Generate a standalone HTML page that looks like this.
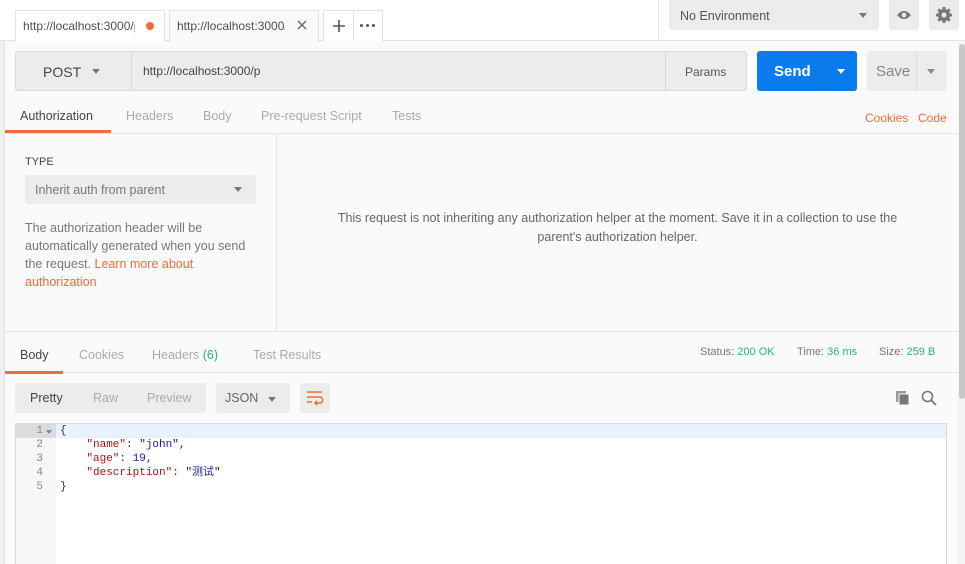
<!DOCTYPE html>
<html><head><meta charset="utf-8"><style>
*{box-sizing:border-box;margin:0;padding:0}
body{width:965px;height:564px;overflow:hidden;background:#fafafa;font-family:"Liberation Sans","Noto Sans CJK SC",sans-serif;font-size:12px;color:#505050;position:relative}
.a{position:absolute}
.t{white-space:nowrap}
.code{font-family:"Liberation Mono","Noto Sans CJK SC",monospace;font-size:11px}
</style></head><body>
<!-- top bar -->
<div class="a" style="left:0;top:0;width:965px;height:41px;background:#fff;border-bottom:1px solid #e3e3e3"></div>
<div class="a" style="left:15px;top:10px;width:150px;height:32px;background:#fff;border:1px solid #e3e3e3;border-bottom:none"></div>
<div class="a t" style="left:23px;top:19px;font-size:12px;color:#505050;width:112px;overflow:hidden">http://localhost:3000/p</div>
<div class="a" style="left:146px;top:22px;width:8px;height:8px;border-radius:50%;background:#f26b3a"></div>
<div class="a" style="left:169px;top:10px;width:150px;height:32px;background:#fafafa;border:1px solid #e3e3e3;border-bottom:none"></div>
<div class="a t" style="left:177px;top:19px;font-size:12px;width:108px;overflow:hidden">http://localhost:3000/p</div>
<svg class="a" style="left:297px;top:20px" width="10" height="10"><path d="M1 1L9 9M9 1L1 9" stroke="#666" stroke-width="1.4"/></svg>
<div class="a" style="left:323px;top:10px;width:60px;height:31px;border:1px solid #e3e3e3;border-bottom:none;background:#fff"></div>
<div class="a" style="left:353px;top:10px;width:1px;height:31px;background:#e3e3e3"></div>
<svg class="a" style="left:332px;top:19px" width="14" height="14"><path d="M7 1V13M1 7H13" stroke="#555" stroke-width="1.6"/></svg>
<div class="a" style="left:360px;top:24px;width:3px;height:3px;border-radius:50%;background:#555;box-shadow:6px 0 #555,12px 0 #555"></div>
<div class="a" style="left:658px;top:0;width:1px;height:41px;background:#e3e3e3"></div>
<div class="a" style="left:669px;top:0;width:210px;height:30px;background:#ececec;border-radius:0 0 3px 3px"></div>
<div class="a t" style="left:680px;top:9px;font-size:12.5px;color:#555">No Environment</div>
<div class="a" style="left:859px;top:13px;border-left:4px solid transparent;border-right:4px solid transparent;border-top:5px solid #777"></div>
<div class="a" style="left:889px;top:0;width:30px;height:30px;background:#ececec;border-radius:0 0 3px 3px"></div>
<svg class="a" style="left:896px;top:9px" width="16" height="12"><path d="M1 6Q8 -2 15 6Q8 14 1 6Z" fill="#777"/><circle cx="8" cy="6" r="2.3" fill="#ececec"/></svg>
<div class="a" style="left:929px;top:0;width:30px;height:30px;background:#ececec;border-radius:0 0 3px 3px"></div>
<svg class="a" style="left:935px;top:6px" width="18" height="18" viewBox="0 0 18 18"><g fill="#777"><circle cx="9" cy="9" r="6"/><rect x="7.5" y="1" width="3" height="16"/><rect x="1" y="7.5" width="16" height="3"/><rect x="7.5" y="1" width="3" height="16" transform="rotate(45 9 9)"/><rect x="7.5" y="1" width="3" height="16" transform="rotate(-45 9 9)"/></g><circle cx="9" cy="9" r="2.5" fill="#ececec"/></svg>
<!-- left strip & scrollbar -->
<div class="a" style="left:0;top:41px;width:5px;height:523px;background:#f0f0f0;border-right:1px solid #e0e0e0"></div>
<div class="a" style="left:958px;top:42px;width:7px;height:522px;background:#f3f3f3"></div>
<div class="a" style="left:959px;top:44px;width:6px;height:355px;background:#c8c8c8;border-radius:3px"></div>
<!-- request bar -->
<div class="a" style="left:15px;top:51px;width:732px;height:40px;background:#ececec;border:1px solid #d8d8d8;border-radius:3px"></div>
<div class="a" style="left:131px;top:52px;width:1px;height:38px;background:#d8d8d8"></div>
<div class="a" style="left:665px;top:52px;width:1px;height:38px;background:#d8d8d8"></div>
<div class="a t" style="left:43px;top:64px;font-size:14px;color:#444">POST</div>
<div class="a" style="left:92px;top:69px;border-left:4px solid transparent;border-right:4px solid transparent;border-top:5px solid #777"></div>
<div class="a t" style="left:143px;top:64px;font-size:12px;color:#444">http://localhost:3000/p</div>
<div class="a t" style="left:685px;top:65px;font-size:12px;color:#555">Params</div>
<div class="a" style="left:757px;top:51px;width:100px;height:40px;background:#097bed;border-radius:3px"></div>
<div class="a" style="left:826px;top:51px;width:1px;height:40px;background:#1a6fd0"></div>
<div class="a t" style="left:774px;top:63px;font-size:15px;font-weight:bold;color:#fff">Send</div>
<div class="a" style="left:837px;top:69px;border-left:4px solid transparent;border-right:4px solid transparent;border-top:5px solid #fff"></div>
<div class="a" style="left:867px;top:51px;width:80px;height:40px;background:#ececec;border-radius:3px"></div>
<div class="a" style="left:916px;top:51px;width:1px;height:40px;background:#dcdcdc"></div>
<div class="a t" style="left:876px;top:63px;font-size:15px;color:#888">Save</div>
<div class="a" style="left:927px;top:69px;border-left:4px solid transparent;border-right:4px solid transparent;border-top:5px solid #888"></div>
<!-- request tabs -->
<div class="a t" style="left:20px;top:109px;font-size:12.5px;color:#444">Authorization</div>
<div class="a t" style="left:126px;top:109px;font-size:12.5px;color:#aaa">Headers</div>
<div class="a t" style="left:203px;top:109px;font-size:12.5px;color:#aaa">Body</div>
<div class="a t" style="left:261px;top:109px;font-size:12.5px;color:#aaa">Pre-request Script</div>
<div class="a t" style="left:392px;top:109px;font-size:12.5px;color:#aaa">Tests</div>
<div class="a t" style="left:865px;top:111px;font-size:12px;color:#f26b3a">Cookies</div>
<div class="a t" style="left:918px;top:111px;font-size:12px;color:#f26b3a">Code</div>
<div class="a" style="left:5px;top:133px;width:953px;height:1px;background:#e5e5e5"></div>
<div class="a" style="left:5px;top:130px;width:106px;height:3px;background:#f26b3a"></div>
<!-- auth panel -->
<div class="a" style="left:276px;top:134px;width:1px;height:197px;background:#e5e5e5"></div>
<div class="a t" style="left:25px;top:156px;font-size:11px;color:#444">TYPE</div>
<div class="a" style="left:25px;top:175px;width:231px;height:29px;background:#ececec;border-radius:3px"></div>
<div class="a t" style="left:35px;top:183px;font-size:12.5px;color:#777">Inherit auth from parent</div>
<div class="a" style="left:234px;top:187px;border-left:4px solid transparent;border-right:4px solid transparent;border-top:5px solid #777"></div>
<div class="a" style="left:25px;top:219px;width:232px;font-size:12.5px;line-height:18px;color:#777">The authorization header will be<br>automatically generated when you send<br>the request. <span style="color:#f26b3a">Learn more about<br>authorization</span></div>
<div class="a t" style="left:277px;top:209px;width:681px;text-align:center;font-size:12.5px;line-height:19px;color:#666">This request is not inheriting any authorization helper at the moment. Save it in a collection to use the<br>parent's authorization helper.</div>
<div class="a" style="left:5px;top:331px;width:953px;height:1px;background:#e5e5e5"></div>
<!-- response tabs -->
<div class="a t" style="left:20px;top:348px;font-size:12.5px;color:#444">Body</div>
<div class="a t" style="left:79px;top:348px;font-size:12.5px;color:#aaa">Cookies</div>
<div class="a t" style="left:152px;top:348px;font-size:12.5px;color:#aaa">Headers <span style="color:#26b47f">(6)</span></div>
<div class="a t" style="left:253px;top:348px;font-size:12.5px;color:#aaa">Test Results</div>
<div class="a t" style="left:700px;top:346px;font-size:11px;color:#777">Status: <span style="color:#26b47f">200 OK</span></div>
<div class="a t" style="left:797px;top:346px;font-size:11px;color:#777">Time: <span style="color:#26b47f">36 ms</span></div>
<div class="a t" style="left:879px;top:346px;font-size:11px;color:#777">Size: <span style="color:#26b47f">259 B</span></div>
<div class="a" style="left:5px;top:372px;width:953px;height:1px;background:#e5e5e5"></div>
<div class="a" style="left:5px;top:371px;width:58px;height:3px;background:#f26b3a"></div>
<!-- response toolbar -->
<div class="a" style="left:15px;top:383px;width:191px;height:30px;background:#ececec;border-radius:3px"></div>
<div class="a t" style="left:30px;top:391px;font-size:12.5px;color:#444">Pretty</div>
<div class="a t" style="left:93px;top:391px;font-size:12.5px;color:#aaa">Raw</div>
<div class="a t" style="left:147px;top:391px;font-size:12.5px;color:#aaa">Preview</div>
<div class="a" style="left:216px;top:383px;width:74px;height:30px;background:#ececec;border-radius:3px"></div>
<div class="a t" style="left:225px;top:391px;font-size:12.5px;color:#666">JSON</div>
<div class="a" style="left:268px;top:397px;border-left:4px solid transparent;border-right:4px solid transparent;border-top:5px solid #777"></div>
<div class="a" style="left:300px;top:383px;width:30px;height:30px;background:#ececec;border-radius:3px"></div>
<svg class="a" style="left:306px;top:390px" width="18" height="16"><path d="M1 2H16M1 7H14Q16.5 7 16.5 10Q16.5 13 14 13H9M11 11L9 13L11 15M1 12H6" stroke="#f26b3a" stroke-width="1.5" fill="none"/></svg>
<svg class="a" style="left:895px;top:390px" width="16" height="16"><rect x="1" y="1" width="10" height="11" fill="#999"/><rect x="4" y="4" width="10" height="11" fill="#777" stroke="#fafafa" stroke-width="1"/></svg>
<svg class="a" style="left:921px;top:390px" width="16" height="16"><circle cx="6.5" cy="6.5" r="5" stroke="#777" stroke-width="1.6" fill="none"/><path d="M10 10L15 15" stroke="#777" stroke-width="1.8"/></svg>
<!-- editor -->
<div class="a" style="left:15px;top:423px;width:932px;height:141px;background:#fff;border:1px solid #d8d8d8;border-bottom:none"></div>
<div class="a" style="left:16px;top:424px;width:40px;height:140px;background:#f7f7f7"></div>
<div class="a" style="left:16px;top:424px;width:40px;height:14px;background:#dcdcdc"></div>
<div class="a" style="left:56px;top:424px;width:890px;height:14px;background:#e8f2ff"></div>
<div class="a code" style="left:16px;top:424px;width:27px;text-align:right;line-height:14px;color:#888">1<br>2<br>3<br>4<br>5</div>
<div class="a" style="left:46px;top:430px;border-left:3px solid transparent;border-right:3px solid transparent;border-top:4px solid #888"></div>
<div class="a code" style="left:60px;top:424px;line-height:14px;color:#333;white-space:pre">{
    <span style="color:#a31515">"name"</span>: <span style="color:#1a1aa6">"john"</span>,
    <span style="color:#a31515">"age"</span>: <span style="color:#1a1aa6">19</span>,
    <span style="color:#a31515">"description"</span>: <span style="color:#1a1aa6">"测试"</span>
}</div>
</body></html>
